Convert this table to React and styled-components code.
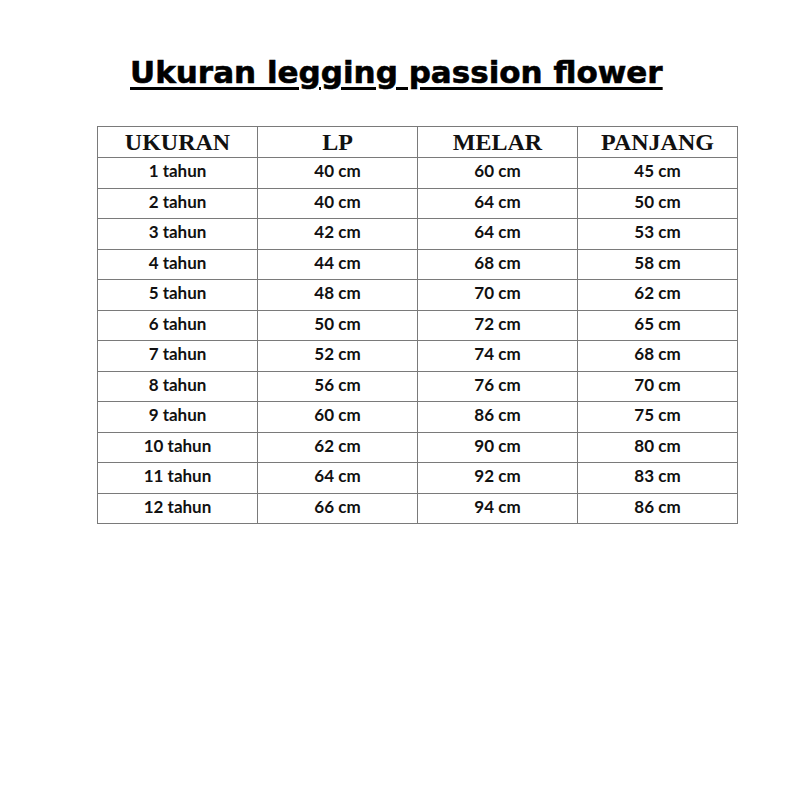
import React from "react";
import styled, { createGlobalStyle } from "styled-components";

const Global = createGlobalStyle`
  html, body { margin: 0; padding: 0; background: #fff; }
`;

const Page = styled.div`
  width: 800px;
  height: 800px;
  background: #fff;
  display: flex;
  flex-direction: column;
  align-items: flex-start;
  padding: 52px 0 0 97px;
  box-sizing: border-box;
`;

const Title = styled.h1`
  margin: 0 0 0 33px;
  font-family: "DejaVu Sans", "Liberation Sans", Arial, sans-serif;
  font-weight: 700;
  font-size: 31px;
  line-height: 40px;
  color: #000;
  -webkit-text-stroke: 0.6px #000;
  text-decoration: underline;
  text-decoration-thickness: 3px;
  text-underline-offset: 4px;
`;

const Table = styled.table`
  margin-top: 34px;
  border-collapse: collapse;
  table-layout: fixed;
  width: 641px;
`;

const HeadCell = styled.th`
  border: 1px solid #7a7a7a;
  height: 29px;
  padding: 0 0 1px;
  font-family: "Liberation Serif", "Times New Roman", serif;
  font-weight: 700;
  font-size: 24px;
  line-height: 26px;
  color: #111;
  text-align: center;
  vertical-align: middle;
`;

const Cell = styled.td`
  border: 1px solid #7a7a7a;
  height: 26.5px;
  padding: 0 0 3px;
  font-family: "Lato", "Open Sans", sans-serif;
  font-weight: 700;
  font-size: 17px;
  line-height: 20px;
  color: #111;
  text-align: center;
  vertical-align: middle;
`;

const rows = [
  ["1 tahun", "40 cm", "60 cm", "45 cm"],
  ["2 tahun", "40 cm", "64 cm", "50 cm"],
  ["3 tahun", "42 cm", "64 cm", "53 cm"],
  ["4 tahun", "44 cm", "68 cm", "58 cm"],
  ["5 tahun", "48 cm", "70 cm", "62 cm"],
  ["6 tahun", "50 cm", "72 cm", "65 cm"],
  ["7 tahun", "52 cm", "74 cm", "68 cm"],
  ["8 tahun", "56 cm", "76 cm", "70 cm"],
  ["9 tahun", "60 cm", "86 cm", "75 cm"],
  ["10 tahun", "62 cm", "90 cm", "80 cm"],
  ["11 tahun", "64 cm", "92 cm", "83 cm"],
  ["12 tahun", "66 cm", "94 cm", "86 cm"],
];

const headers = ["UKURAN", "LP", "MELAR", "PANJANG"];

export default function App() {
  return (
    <>
      <Global />
      <Page>
        <Title>Ukuran legging passion flower</Title>
        <Table>
          <thead>
            <tr>
              {headers.map((h) => (
                <HeadCell key={h}>{h}</HeadCell>
              ))}
            </tr>
          </thead>
          <tbody>
            {rows.map((r) => (
              <tr key={r[0]}>
                {r.map((c, i) => (
                  <Cell key={i}>{c}</Cell>
                ))}
              </tr>
            ))}
          </tbody>
        </Table>
      </Page>
    </>
  );
}
